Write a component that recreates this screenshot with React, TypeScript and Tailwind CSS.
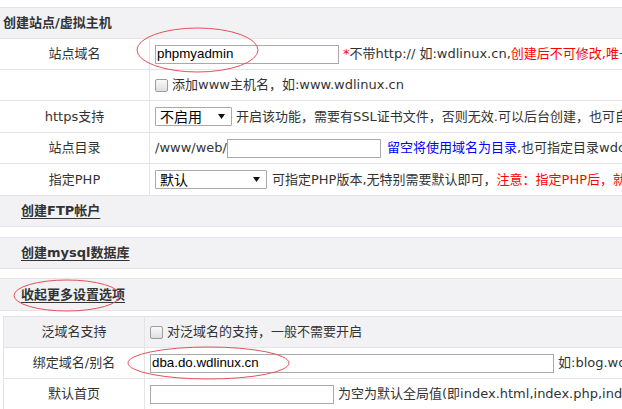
import type { ReactNode } from "react";

const LINE = "border-[#e3e4e8]";

function Caret() {
  return (
    <svg width="7" height="5" viewBox="0 0 7 5" className="absolute right-[6px] top-[6px]">
      <polygon points="0,0 7,0 3.5,5" fill="#111" />
    </svg>
  );
}

function FakeSelect({ value, w }: { value: string; w: string }) {
  return (
    <div className={`relative h-[19px] ${w} border border-[#a9a9a9] bg-white rounded-[1px] pl-[4px] flex items-center text-[14px] text-black font-['Noto_Sans_CJK_SC',sans-serif]`}>
      {value}
      <Caret />
    </div>
  );
}

function Check() {
  return (
    <span className="inline-block w-[13px] h-[13px] rounded-[2px] border border-[#9c9c9c] bg-gradient-to-b from-[#fafafa] to-[#dedede]" />
  );
}

function Row({ label, h, children }: { label: string; h: string; children?: ReactNode }) {
  return (
    <div className={`flex ${h} border-b ${LINE}`}>
      <div className={`w-[150px] shrink-0 border-r ${LINE} flex items-center justify-center`}>{label}</div>
      <div className="flex items-center pl-[5px]">{children}</div>
    </div>
  );
}

function SubRow({ label, h, gray, children }: { label: string; h: string; gray?: boolean; children?: ReactNode }) {
  return (
    <div className={`flex ${h} border-b ${LINE} ${gray ? "bg-[#f2f2f4]" : "bg-white"}`}>
      <div className={`w-[141px] shrink-0 border-r ${LINE} flex items-center justify-center`}>{label}</div>
      <div className="flex items-center pl-[5px]">{children}</div>
    </div>
  );
}

function Toggle({ text, cls }: { text: string; cls: string }) {
  return (
    <div className={`${cls} flex items-center bg-[#f2f2f4] border-y ${LINE} pl-[21px]`}>
      <span className="font-bold underline underline-offset-[3px]">{text}</span>
    </div>
  );
}

export default function App() {
  return (
    <div className="relative w-[622px] h-[409px] overflow-hidden bg-white whitespace-nowrap text-[13px] text-[#333] font-['DejaVu_Sans','Noto_Sans_CJK_SC',sans-serif]">
      <div className="w-[1000px] pt-[7px]">
        <div className={`h-[32px] border-y ${LINE} bg-[#f2f2f4] flex items-center pl-[3px] font-bold`}>
          创建站点/虚拟主机
        </div>

        <Row label="站点域名" h="h-[31px]">
          <div className="w-[184px] h-[19px] border border-[#a9a9a9] flex items-center pl-[1px] text-[13.33px] text-black font-['Liberation_Sans',sans-serif]">
            phpmyadmin
          </div>
          <span className="ml-[4px]">
            <span className="text-[#f00]">*</span>不带http:// 如:wdlinux.cn,
            <span className="text-[#f00]">创建后不可修改,唯一</span>
          </span>
        </Row>

        <Row label="" h="h-[31px]">
          <Check />
          <span className="ml-[4px]">添加www主机名，如:www.wdlinux.cn</span>
        </Row>

        <Row label="https支持" h="h-[32px]">
          <FakeSelect value="不启用" w="w-[77px]" />
          <span className="ml-[4px]">开启该功能，需要有SSL证书文件，否则无效.可以后台创建，也可自行上传</span>
        </Row>

        <Row label="站点目录" h="h-[31px]">
          <span>/www/web/</span>
          <div className="w-[154px] h-[19px] border border-[#a9a9a9]" />
          <span className="ml-[6px] text-[#00f]">留空将使用域名为目录</span>
          <span>,也可指定目录wdcp</span>
        </Row>

        <Row label="指定PHP" h="h-[32px]">
          <FakeSelect value="默认" w="w-[112px]" />
          <span className="ml-[5px]">可指定PHP版本,无特别需要默认即可，</span>
          <span className="text-[#f00]">注意：指定PHP后，就</span>
        </Row>

        <div className={`h-[31px] flex items-center bg-[#f2f2f4] border-b ${LINE} pl-[21px]`}>
          <span className="font-bold underline underline-offset-[3px]">创建FTP帐户</span>
        </div>
        <div className="h-[10px]" />
        <Toggle text="创建mysql数据库" cls="h-[32px]" />
        <div className="h-[9px]" />
        <Toggle text="收起更多设置选项" cls="h-[33px]" />

        <div className={`mt-[5px] ml-[3px] border-t border-l ${LINE}`}>
          <SubRow label="泛域名支持" h="h-[31px]" gray>
            <Check />
            <span className="ml-[4px]">对泛域名的支持，一般不需要开启</span>
          </SubRow>
          <SubRow label="绑定域名/别名" h="h-[31px]">
            <div className="w-[404px] h-[19px] border border-[#a9a9a9] flex items-center pl-[1px] text-[13.33px] text-black font-['Liberation_Sans',sans-serif]">
              dba.do.wdlinux.cn
            </div>
            <span className="ml-[4px]">如:blog.wdlinux.cn</span>
          </SubRow>
          <SubRow label="默认首页" h="h-[31px]">
            <div className="w-[184px] h-[19px] border border-[#a9a9a9]" />
            <span className="ml-[4px]">为空为默认全局值(即index.html,index.php,index.htm)</span>
          </SubRow>
        </div>
      </div>

      {/* red annotation ellipses */}
      <svg className="absolute inset-0 pointer-events-none" width="622" height="409">
        <ellipse cx="197.5" cy="50" rx="60.5" ry="22" fill="none" stroke="#e5505a" strokeWidth="1" />
        <ellipse cx="67" cy="295.5" rx="53" ry="15.5" fill="none" stroke="#e5505a" strokeWidth="1" />
        <ellipse cx="208.5" cy="363" rx="80.5" ry="16" fill="none" stroke="#e5505a" strokeWidth="1" />
      </svg>
    </div>
  );
}
